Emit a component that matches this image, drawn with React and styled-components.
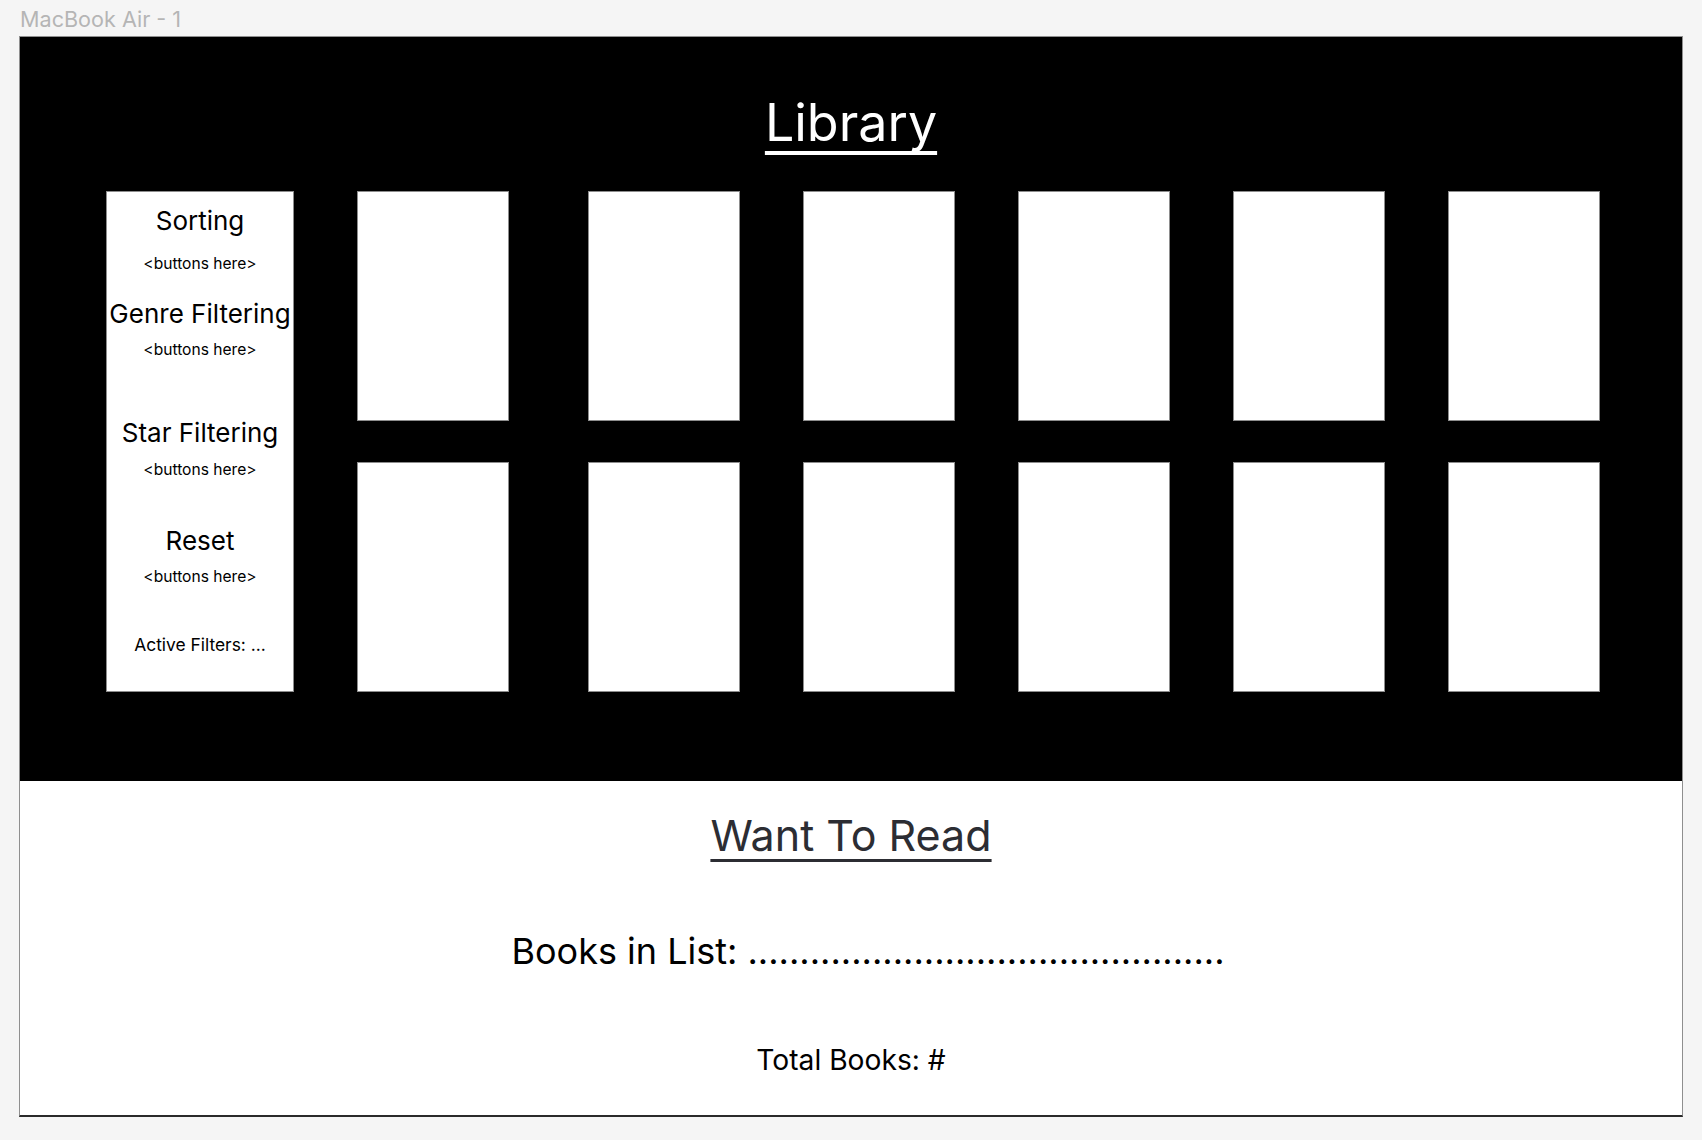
import React from "react";
import styled, { createGlobalStyle } from "styled-components";

const GlobalStyle = createGlobalStyle`
  html, body {
    margin: 0;
    padding: 0;
    background: #f5f5f5;
  }
  body {
    font-family: Inter, "Noto Sans", "Liberation Sans", sans-serif;
    -webkit-font-smoothing: antialiased;
  }
  * { box-sizing: border-box; }
`;

const Page = styled.div`
  width: 1702px;
  min-height: 1140px;
  padding: 7px 19px 0 19px;
  background: #f5f5f5;
`;

const FrameLabel = styled.div`
  font-size: 21.6px;
  line-height: 25px;
  height: 25px;
  color: #b5b5b5;
  margin: 0 0 4px 1px;
`;

const Frame = styled.div`
  width: 1664px;
  border: 1px solid #8f8f8f;
  border-bottom: 2px solid #2a2a2a;
  background: #fff;
  display: flex;
  flex-direction: column;
`;

const LibrarySection = styled.section`
  background: #000;
  height: 744px;
  padding: 55px 0 0 0;
  display: flex;
  flex-direction: column;
`;

const Title = styled.h1`
  margin: 0;
  align-self: center;
  font-weight: 400;
  font-size: ${(p) => p.$size}px;
  line-height: ${(p) => p.$lh}px;
  color: ${(p) => p.$color};
  text-decoration: underline;
  text-decoration-skip-ink: none;
  text-decoration-thickness: ${(p) => p.$thick}px;
  text-underline-offset: ${(p) => p.$offset}px;
`;

const ContentRow = styled.div`
  display: flex;
  align-items: stretch;
  margin-top: 37px;
  padding-left: 86px;
`;

const Sidebar = styled.aside`
  width: 188px;
  background: #fff;
  border: 1px solid #8d8d8d;
  display: flex;
  flex-direction: column;
  align-items: center;
  padding-top: 13px;
  color: #000;
`;

const SideHeading = styled.div`
  font-size: 26px;
  line-height: 32px;
  white-space: nowrap;
  text-align: center;
  margin-top: ${(p) => p.$mt || 0}px;
`;

const SideNote = styled.div`
  font-size: ${(p) => p.$size || 15.6}px;
  line-height: 20px;
  white-space: nowrap;
  text-align: center;
  margin-top: ${(p) => p.$mt || 0}px;
`;

const BookGrid = styled.div`
  margin-left: 63px;
  display: grid;
  grid-template-columns: 168px repeat(5, 152px);
  grid-template-rows: 230px 230px;
  column-gap: 63px;
  row-gap: 41px;
`;

const BookCard = styled.div`
  width: 152px;
  background: #fff;
  border: 1px solid #8d8d8d;
`;

const ReadSection = styled.section`
  height: 334px;
  background: #fff;
  display: flex;
  flex-direction: column;
  align-items: center;
  padding-top: 29px;
`;

const ListLine = styled.div`
  font-size: ${(p) => p.$size}px;
  line-height: ${(p) => p.$lh}px;
  color: #000;
  white-space: nowrap;
  margin-top: ${(p) => p.$mt}px;
  margin-left: ${(p) => p.$shift || 0}px;
`;

const sections = [
  { heading: "Sorting", hmt: 0, nmt: 17 },
  { heading: "Genre Filtering", hmt: 24, nmt: 10 },
  { heading: "Star Filtering", hmt: 57, nmt: 11 },
  { heading: "Reset", hmt: 45, nmt: 10 },
];

export default function App() {
  const books = Array.from({ length: 12 });
  return (
    <>
      <GlobalStyle />
      <Page>
        <FrameLabel>MacBook Air - 1</FrameLabel>
        <Frame>
          <LibrarySection>
            <Title $size={52} $lh={62} $color="#ffffff" $thick={3.5} $offset={10}>
              Library
            </Title>
            <ContentRow>
              <Sidebar>
                {sections.map((s) => (
                  <React.Fragment key={s.heading}>
                    <SideHeading $mt={s.hmt}>{s.heading}</SideHeading>
                    <SideNote $mt={s.nmt}>&lt;buttons here&gt;</SideNote>
                  </React.Fragment>
                ))}
                <SideNote $size={17.4} $mt={48}>
                  Active Filters: ...
                </SideNote>
              </Sidebar>
              <BookGrid>
                {books.map((_, i) => (
                  <BookCard key={i} />
                ))}
              </BookGrid>
            </ContentRow>
          </LibrarySection>
          <ReadSection>
            <Title $size={43} $lh={51} $color="#2c2d33" $thick={3} $offset={8}>
              Want To Read
            </Title>
            <ListLine $size={36} $lh={44} $mt={68} $shift={34}>
              Books in List: {".".repeat(46)}
            </ListLine>
            <ListLine $size={28.2} $lh={34} $mt={70}>
              Total Books: #
            </ListLine>
          </ReadSection>
        </Frame>
      </Page>
    </>
  );
}
